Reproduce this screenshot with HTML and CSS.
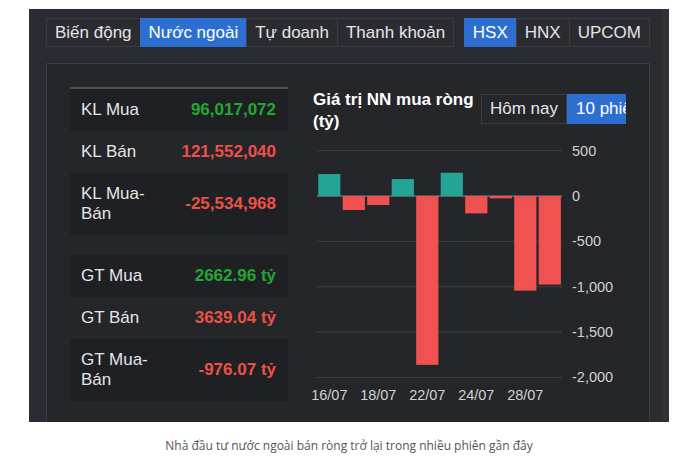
FILE: index.html
```html
<!DOCTYPE html>
<html lang="vi">
<head>
  <meta charset="UTF-8">
  <meta name="viewport" content="width=device-width,initial-scale=1.0">
  <title>Nước ngoài</title>
  <link rel="stylesheet" href="styles.css">
</head>
<body>
  <figure class="shot">
    <div class="widget">
      <nav class="tabbar">
        <div class="tabs">
          <span class="tab">Biến động</span>
          <span class="tab active">Nước ngoài</span>
          <span class="tab">Tự doanh</span>
          <span class="tab">Thanh khoản</span>
        </div>
        <div class="tabs">
          <span class="tab active">HSX</span>
          <span class="tab">HNX</span>
          <span class="tab">UPCOM</span>
        </div>
      </nav>

      <section class="panel">
        <div class="stats">
          <table class="stat-table first">
            <tr class="dark"><td class="label">KL Mua</td><td class="val up">96,017,072</td></tr>
            <tr><td class="label">KL Bán</td><td class="val down">121,552,040</td></tr>
            <tr class="dark"><td class="label">KL Mua-Bán</td><td class="val down">-25,534,968</td></tr>
          </table>
          <table class="stat-table">
            <tr class="dark"><td class="label">GT Mua</td><td class="val up">2662.96 tỷ</td></tr>
            <tr><td class="label">GT Bán</td><td class="val down">3639.04 tỷ</td></tr>
            <tr class="dark"><td class="label">GT Mua-Bán</td><td class="val down">-976.07 tỷ</td></tr>
          </table>
        </div>

        <div class="chart">
          <div class="chart-head">
            <h3>Giá trị NN mua ròng (tỷ)</h3>
            <div class="switch">
              <span class="btn">Hôm nay</span>
              <span class="btn active">10 phiên</span>
            </div>
          </div>
          <svg id="bars" width="313" height="280"></svg>
        </div>
      </section>
    </div>
    <figcaption>Nhà đầu tư nước ngoài bán ròng trở lại trong nhiều phiên gần đây</figcaption>
  </figure>

  <script>
    // last 10 sessions, net foreign buy value (ty)
    const days = ['16/07', '17/07', '18/07', '21/07', '22/07', '23/07', '24/07', '25/07', '28/07', '29/07'];
    const values = [242, -154, -99, 187, -1861, 257, -191, -25, -1043, -976.07];

    const svg = document.getElementById('bars');
    const NS = 'http://www.w3.org/2000/svg';
    const step = 45.35 / 500;
    const zero = 17.7 + 500 * step;
    const y = v => zero - v * step;
    const left = 4, right = 249, band = 24.5;

    function add(tag, attrs, text) {
      const el = document.createElementNS(NS, tag);
      for (const k in attrs) el.setAttribute(k, attrs[k]);
      if (text) el.textContent = text;
      svg.appendChild(el);
      return el;
    }

    // grid + y axis
    [500, 0, -500, -1000, -1500, -2000].forEach(v => {
      add('line', { x1: left, x2: right, y1: y(v), y2: y(v), class: v === 0 ? 'zero' : 'grid' });
      add('text', { x: 259, y: y(v), class: 'axis', 'dominant-baseline': 'central' }, v.toLocaleString('en-US'));
    });

    // bars
    values.forEach((v, i) => {
      const x = left + i * band + 1.2;
      const h = Math.abs(v) * step;
      add('rect', {
        x: x, width: 22.2,
        y: v > 0 ? y(v) : zero,
        height: h,
        class: v > 0 ? 'pos' : 'neg'
      });
      if (i % 2 === 0) {
        add('text', { x: x + 11.1, y: 262, class: 'axis', 'text-anchor': 'middle', 'dominant-baseline': 'central' }, days[i]);
      }
    });
  </script>
</body>
</html>
```

FILE: styles.css
```css
:root {
  --bg: #2a2c31;
  --panel: #24262a;
  --row: #1e2024;
  --line: #3b3d42;
  --text: #e4e5e7;
  --blue: #2d6fd0;
  --up: #22a832;
  --down: #ec5147;
}
*, *::before, *::after { box-sizing: border-box; }
body {
  margin: 0;
  background: #fff;
  font-family: 'Liberation Sans', Arial, sans-serif;
}
.shot {
  margin: 9px 0 0 29px;
  width: 640px;
}

.widget {
  height: 413px;
  background: var(--bg);
  border-right: 7px solid #303237;
  padding: 9px 12px 0 17px;
  display: flex;
  flex-direction: column;
  overflow: hidden;
  color: var(--text);
}

.tabbar {
  display: flex;
  justify-content: space-between;
  margin-bottom: 16px;
}
.tabs { display: flex; }
.tab {
  height: 29px;
  line-height: 27px;
  padding: 0 8px;
  font-size: 17px;
  border: 1px solid var(--line);
  margin-left: -1px;
}
.tab:first-child { margin-left: 0; }
.tab.active {
  background: var(--blue);
  border-color: var(--blue);
  color: #fff;
}

.panel {
  flex: 1;
  display: flex;
  gap: 25px;
  background: var(--panel);
  border: 1px solid var(--line);
  border-bottom: none;
  padding: 23px 23px 0;
}

.stats { width: 218px; flex-shrink: 0; }
.stat-table {
  width: 100%;
  border-collapse: collapse;
  font-size: 17px;
  line-height: 20px;
}
.stat-table.first {
  border-top: 2px solid #4c4f55;
  margin-bottom: 20px;
}
.stat-table td { padding: 11px 12px 11px 11px; }
.stat-table tr.dark { background: var(--row); }
.stat-table .label { width: 88px; padding-right: 0; }
.stat-table .val {
  text-align: right;
  font-weight: 700;
  white-space: nowrap;
}
.up { color: var(--up); }
.down { color: var(--down); }

.chart {
  width: 313px;
  flex-shrink: 0;
}
.chart-head {
  display: flex;
  padding-top: 2px;
  overflow: hidden;
}
.chart-head h3 {
  margin: 0;
  width: 165px;
  flex-shrink: 0;
  font-size: 17px;
  line-height: 22px;
  font-weight: 700;
  color: #fff;
}
.switch {
  display: flex;
  flex-shrink: 0;
  margin: 5px 0 0 3px;
}
.btn {
  height: 30px;
  line-height: 28px;
  padding: 0 8px;
  font-size: 17px;
  border: 1px solid var(--line);
  white-space: nowrap;
}
.btn.active {
  background: var(--blue);
  border-color: var(--blue);
  color: #fff;
}

#bars { display: block; overflow: visible; }
#bars .grid { stroke: #3d4046; stroke-width: 1; }
#bars .zero { stroke: #8e9298; stroke-width: 1; }
#bars .pos { fill: #25a595; }
#bars .neg { fill: #f05252; }
#bars .axis {
  fill: #cfd1d5;
  font-size: 14.5px;
  font-family: 'Liberation Sans', Arial, sans-serif;
}

figcaption {
  margin: 15px 0 0;
  text-align: center;
  font-family: 'Open Sans', sans-serif;
  font-size: 12px;
  line-height: 18px;
  color: #555;
}
```
